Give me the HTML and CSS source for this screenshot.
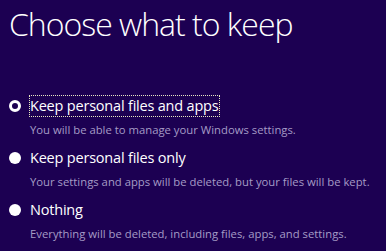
FILE: index.html
```html
<!DOCTYPE html>
<html>
<head>
	<title>Choose what to keep</title>
	<link rel="stylesheet" href="styles.css">
</head>
<body>
	<h1 class="page-title">Choose what to keep</h1>

	<!-- Reset options -->
	<div class="options">
		<div class="option">
			<span class="radio selected"></span>
			<div class="option-text">
				<span class="label focused">Keep personal files and apps</span>
				<p class="desc">You will be able to manage your Windows settings.</p>
			</div>
		</div>
		<div class="option">
			<span class="radio"></span>
			<div class="option-text">
				<span class="label">Keep personal files only</span>
				<p class="desc">Your settings and apps will be deleted, but your files will be kept.</p>
			</div>
		</div>
		<div class="option">
			<span class="radio"></span>
			<div class="option-text">
				<span class="label">Nothing</span>
				<p class="desc">Everything will be deleted, including files, apps, and settings.</p>
			</div>
		</div>
	</div>
</body>
</html>
```

FILE: styles.css
```css
/* General reset */
* {
	margin: 0;
	padding: 0;
	box-sizing: border-box;
}

body {
	width: 386px;
	height: 251px;
	overflow: hidden;
	background-color: #1c0052;
	color: #ffffff;
	font-family: "Open Sans", "Noto Sans", sans-serif;
	padding: 4px 0 0 9px;
}

/* Big heading */
.page-title {
	font-size: 32px;
	font-weight: 300;
	line-height: 40px;
	letter-spacing: -1px;
}

.options {
	display: flex;
	flex-direction: column;
	gap: 8px;
	margin-top: 50px;
}

.option {
	display: flex;
	align-items: flex-start;
	gap: 8px;
}

/* Radio dots */
.radio {
	width: 12px;
	height: 12px;
	margin-top: 6px;
	border-radius: 50%;
	background-color: #ffffff;
	flex-shrink: 0;
}

.radio.selected {
	border: 3px solid #ffffff;
	background-color: #1c0052;
}

.label {
	display: inline-block;
	font-size: 14.5px;
	line-height: 20px;
	letter-spacing: -0.2px;
	padding: 0 1px 0 0;
	border: 1px dotted transparent;
}

.label.focused {
	border-color: #e8e8c0;
}

.desc {
	margin-top: 5px;
	padding-left: 1px;
	font-size: 11.3px;
	line-height: 16px;
	color: #a59cc6;
}
```
